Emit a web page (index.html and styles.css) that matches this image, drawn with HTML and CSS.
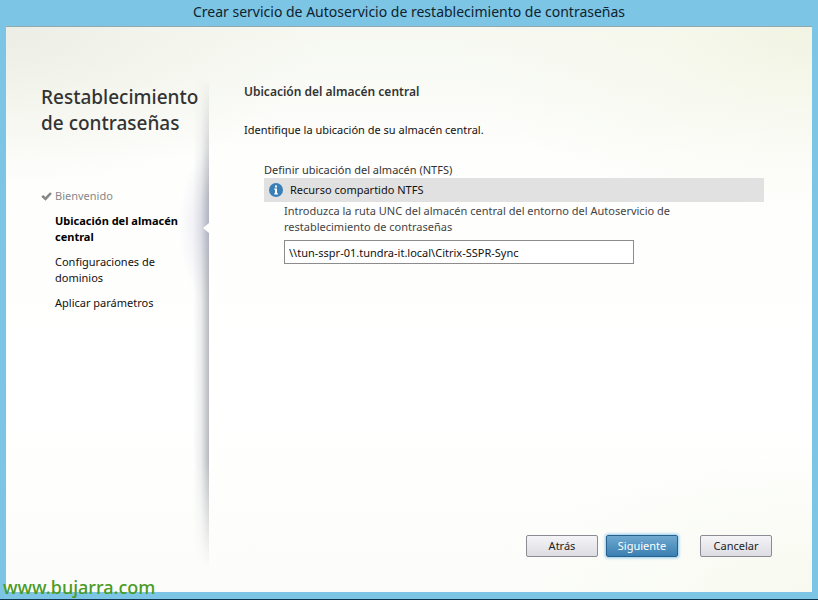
FILE: index.html
```html
<!DOCTYPE html>
<html lang="es">
<head>
<meta charset="utf-8">
<meta name="viewport" content="width=device-width, initial-scale=1">
<title>Crear servicio de Autoservicio de restablecimiento de contraseñas</title>
<link rel="stylesheet" href="styles.css">
</head>
<body>
<div class="window">
  <header class="titlebar">Crear servicio de Autoservicio de restablecimiento de contraseñas</header>
  <div class="panel">
    <aside class="sidebar">
      <h1 class="product">Restablecimiento<br>de contraseñas</h1>
      <ol class="steps">
        <li class="step step-done">
          <svg class="check" viewBox="0 0 11 9" aria-hidden="true"><path d="M0.2 4.8 2.2 3.1 4.3 5 9 0.2 10.9 1.8 4.6 8.8Z"/></svg>Bienvenido
        </li>
        <li class="step step-current" aria-current="step">Ubicación del almacén central</li>
        <li class="step">Configuraciones de dominios</li>
        <li class="step">Aplicar parámetros</li>
      </ol>
      <div class="edge"></div>
      <div class="glow"></div>
      <svg class="pointer" viewBox="0 0 6 10" aria-hidden="true"><path d="M6 0V10L0 5Z"/></svg>
    </aside>
    <main class="content">
      <h2 class="heading">Ubicación del almacén central</h2>
      <p class="intro">Identifique la ubicación de su almacén central.</p>
      <section class="store">
        <h3 class="store-title">Definir ubicación del almacén (NTFS)</h3>
        <div class="banner">
          <svg class="info" viewBox="0 0 14 14" aria-hidden="true"><circle cx="7" cy="7" r="7" fill="#3a7fb8"/><path fill="#fff" d="M6 2.4h2v2H6zM5.2 5.6H8v4.6h1v1.2H5.2v-1.2H6V6.8h-.8z"/></svg>
          <span>Recurso compartido NTFS</span>
        </div>
        <div class="field">
          <label class="field-label" for="path">Introduzca la ruta UNC del almacén central del entorno del Autoservicio de restablecimiento de contraseñas</label>
          <input class="field-input" id="path" type="text" value="\\tun-sspr-01.tundra-it.local\Citrix-SSPR-Sync">
        </div>
      </section>
      <div class="actions">
        <button class="button" type="button">Atrás</button>
        <button class="button button-primary" type="button">Siguiente</button>
        <button class="button button-cancel" type="button">Cancelar</button>
      </div>
    </main>
  </div>
  <div class="watermark">www.bujarra.com</div>
</div>
</body>
</html>
```
FILE: styles.css
```css
* {
  box-sizing: border-box;
}

body {
  margin: 0;
  font-family: "Noto Sans", "Open Sans", sans-serif;
  font-size: 11px;
  line-height: 16px;
  color: #111;
}

h1, h2, h3, p, ol {
  margin: 0;
  padding: 0;
  font-weight: normal;
}

.window {
  position: relative;
  display: flex;
  flex-direction: column;
  min-height: 100vh;
  padding: 0 6px 7px;
  background: #7cc5e4;
  border-bottom: 1px solid #0d3550;
}

.titlebar {
  height: 26px;
  line-height: 24px;
  font-size: 14px;
  text-align: center;
  color: #10222e;
}

.panel {
  flex: 1;
  display: flex;
  border-top: 1px solid #8fa9ae;
  background:
    radial-gradient(ellipse 320px 160px at 0 0, #ecede4 0%, rgba(241, 243, 233, 0.7) 45%, rgba(255, 255, 255, 0) 100%),
    radial-gradient(ellipse 360px 190px at 100% 0, #f1f4e2 0%, rgba(246, 248, 236, 0.7) 45%, rgba(255, 255, 255, 0) 100%),
    radial-gradient(ellipse 300px 140px at 100% 100%, #f8faf0 0%, rgba(255, 255, 255, 0) 100%),
    linear-gradient(#f6f8f1 0, #fefefd 130px, #fff 380px, #fcfdfa 100%);
}

.sidebar {
  position: relative;
  flex: none;
  width: 203px;
  padding: 57px 12px 0 35px;
}

.product {
  font-size: 19px;
  line-height: 26px;
  font-weight: 500;
  color: #333;
  white-space: nowrap;
}

.steps {
  display: flex;
  flex-direction: column;
  gap: 9px;
  margin-top: 52px;
  padding-left: 14px;
  list-style: none;
}

.step {
  position: relative;
}

.step-done {
  color: #888;
}

.step-current {
  font-weight: bold;
  color: #000;
}

.check {
  position: absolute;
  left: -14px;
  top: 4px;
  width: 11px;
  height: 9px;
  fill: #888;
}

.edge {
  position: absolute;
  top: 50px;
  bottom: 24px;
  right: 0;
  width: 16px;
  background: linear-gradient(to right, rgba(120, 125, 135, 0), rgba(120, 125, 135, 0.14) 50%, rgba(110, 115, 125, 0.5));
  mask-image: linear-gradient(transparent, #000 25%, #000 78%, transparent);
}

.glow {
  position: absolute;
  top: 125px;
  right: 0;
  width: 30px;
  height: 150px;
  background: radial-gradient(ellipse 30px 75px at 100% 50%, rgba(160, 165, 200, 0.28), rgba(160, 165, 200, 0));
}

.pointer {
  position: absolute;
  top: 196px;
  right: 0;
  width: 6px;
  height: 10px;
  fill: #fff;
}

.content {
  flex: 1;
  display: flex;
  flex-direction: column;
  padding: 57px 40px 35px 35px;
}

.heading {
  font-size: 12px;
  line-height: 16px;
  font-weight: 600;
  color: #333;
}

.intro {
  margin-top: 22px;
}

.store {
  max-width: 520px;
  margin-top: 24px;
  padding-left: 20px;
}

.store-title {
  font-size: 11px;
  color: #333;
}

.banner {
  display: flex;
  align-items: center;
  gap: 7px;
  height: 24px;
  padding-left: 5px;
  background: #e1e1e1;
}

.info {
  width: 14px;
  height: 14px;
}

.field {
  display: flex;
  flex-direction: column;
  padding: 1px 0 0 20px;
}

.field-label {
  max-width: 440px;
  color: #444;
}

.field-input {
  width: 350px;
  height: 24px;
  margin-top: 5px;
  padding: 0 4px;
  border: 1px solid #8c8c8c;
  background: #fff;
  font: inherit;
  color: #111;
}

.actions {
  display: flex;
  justify-content: flex-end;
  gap: 8px;
  margin-top: auto;
}

.button {
  width: 72px;
  height: 22px;
  padding: 0;
  border: 1px solid #8b8b93;
  border-radius: 2px;
  background: linear-gradient(#f5f5f8, #dcdce2);
  font: inherit;
  line-height: 20px;
  color: #222;
}

.button-primary {
  border-color: #25608f;
  background: linear-gradient(#6fa9d0, #3b7fb2);
  box-shadow: 0 0 3px 1px #8fc9ea;
  color: #fff;
}

.button-cancel {
  margin-left: 14px;
}

.watermark {
  position: absolute;
  left: 3px;
  bottom: 0;
  font-size: 18px;
  line-height: 24px;
  font-weight: 500;
  color: #4a9a24;
}
```
